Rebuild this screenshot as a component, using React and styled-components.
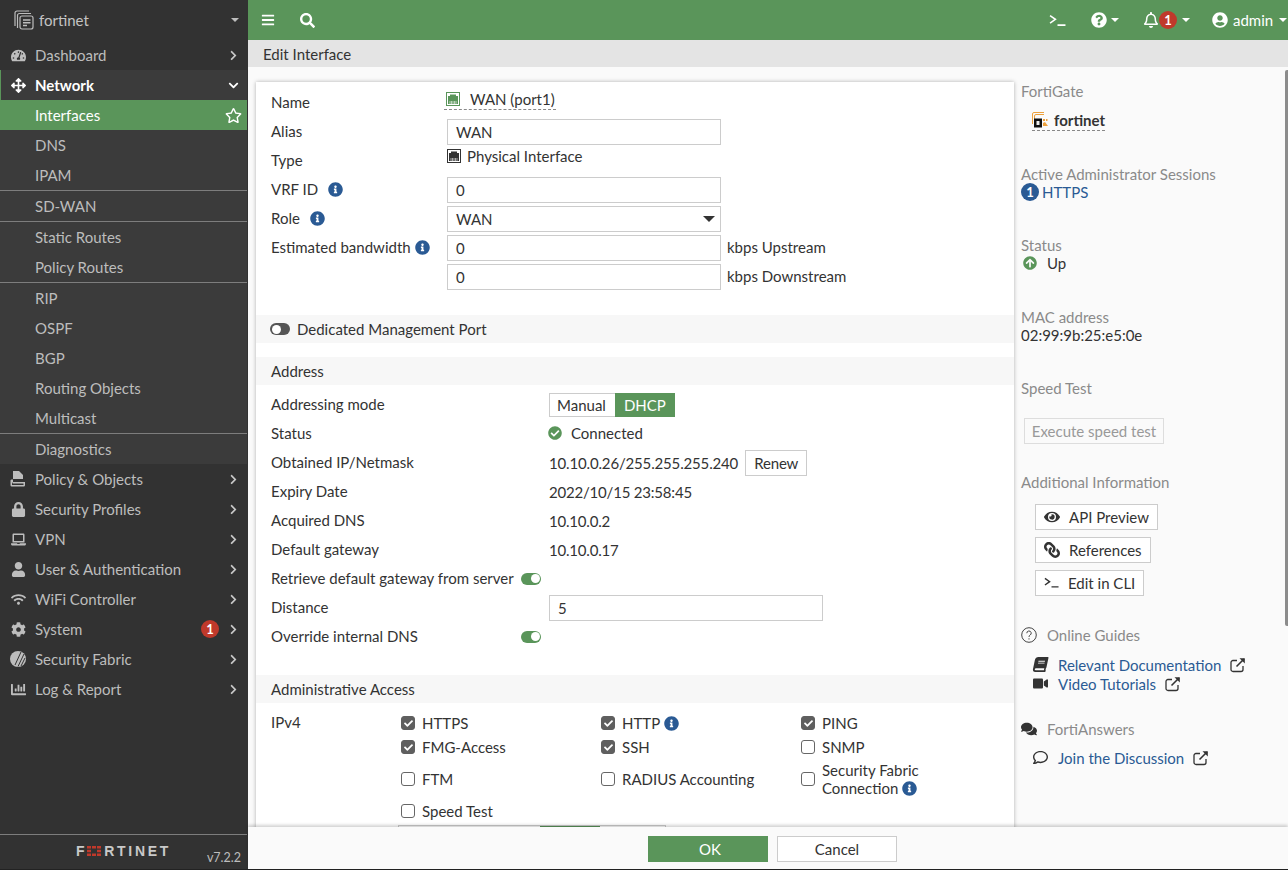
import React from 'react';
import styled, { createGlobalStyle } from 'styled-components';
import {
  FaTachometerAlt, FaArrowsAlt, FaRegStar, FaLock, FaLaptop, FaUser, FaWifi, FaCog, FaChartBar,
  FaBars, FaSearch, FaQuestionCircle, FaRegBell, FaUserCircle, FaInfoCircle, FaCheckCircle,
  FaArrowCircleUp, FaEye, FaLink, FaBook, FaVideo, FaComments, FaRegComment,
  FaChevronRight, FaChevronDown, FaCheck,
} from 'react-icons/fa';

const GREEN = '#5a955a';
const BLUE = '#2a5a94';

const GlobalStyle = createGlobalStyle`
  html, body { margin: 0; padding: 0; height: 100%; overflow: hidden; }
  body { font-family: Lato, "Liberation Sans", sans-serif; font-size: 15px; color: #333; }
  #root { height: 100%; }
  * { box-sizing: border-box; }
`;

const Shell = styled.div`
  display: grid;
  grid-template-columns: 248px 1fr;
  height: 870px;
  position: relative;
  background: #fafafa;
`;

/* ---- left nav ---- */
const Side = styled.nav`
  background: #323232;
  color: #bdbdbd;
  display: flex;
  flex-direction: column;
  height: 870px;
  border-bottom: 1px solid #222;
`;

const SideHead = styled.div`
  height: 40px;
  display: flex;
  align-items: center;
  padding: 0 9px 0 14px;
  color: #c4c4c4;
  gap: 5px;
`;

const Caret = styled.span`
  width: 0;
  height: 0;
  border-left: ${p => p.$size || 4}px solid transparent;
  border-right: ${p => p.$size || 4}px solid transparent;
  border-top: ${p => p.$size || 4}px solid ${p => p.$color || '#fff'};
  margin-left: ${p => p.$left || 0}px;
`;

const NavRow = styled.div`
  height: 30px;
  display: flex;
  align-items: center;
  padding-left: 10px;
  padding-right: 8px;
  margin-right: 1px;
  font-weight: ${p => (p.$open ? 700 : 400)};
  color: ${p => (p.$open ? '#fff' : '#bdbdbd')};
  background: ${p => (p.$open ? '#3b3b3b' : 'transparent')};
  box-shadow: ${p => (p.$open ? `inset 1px 0 0 ${GREEN}` : 'none')};
`;

const NavIcon = styled.span`
  width: 16px;
  height: 16px;
  margin-right: 9px;
  display: flex;
  align-items: center;
  justify-content: center;
  font-size: 15px;
`;

const NavLabel = styled.span`
  flex: 1;
`;

const Chevron = styled.span`
  display: flex;
  font-size: 11px;
  color: ${p => (p.$open ? '#fff' : '#c8c8c8')};
`;

const SubGroup = styled.div`
  background: #3b3b3b;
  margin-right: 1px;
`;

const SubRow = styled.div`
  height: 30px;
  display: flex;
  align-items: center;
  justify-content: space-between;
  padding: 0 5px 0 35px;
  color: ${p => (p.$active ? '#fff' : '#bdbdbd')};
  background: ${p => (p.$active ? GREEN : 'transparent')};
`;

const SubRule = styled.div`
  height: 1px;
  background: #7d7d7d;
`;

const RedBadge = styled.span`
  width: 18px;
  height: 18px;
  border-radius: 50%;
  background: #c0392b;
  color: #fff;
  font-size: 13px;
  font-weight: 700;
  display: flex;
  align-items: center;
  justify-content: center;
  margin-right: ${p => p.$right || 0}px;
`;

const SideFoot = styled.div`
  margin-top: auto;
  height: 35px;
  border-top: 1px solid #7d7d7d;
  display: flex;
  align-items: flex-start;
  justify-content: space-between;
  padding: 9px 6px 0 76px;
  margin-right: 1px;
`;

const Logo = styled.span`
  display: flex;
  align-items: center;
  font-family: "Liberation Sans", sans-serif;
  font-weight: 700;
  font-size: 14px;
  line-height: 14px;
  letter-spacing: 2.7px;
  color: #c9c9c9;
`;

const Version = styled.span`
  font-size: 12.5px;
  margin-top: 6px;
  color: #bdbdbd;
`;

/* ---- right of nav ---- */
const Main = styled.div`
  display: flex;
  flex-direction: column;
  height: 870px;
  min-width: 0;
  border-bottom: 1px solid #222;
`;

const TopBar = styled.header`
  height: 40px;
  flex: none;
  background: ${GREEN};
  color: #fff;
  display: flex;
  align-items: center;
  padding-left: 13px;
`;

const TopIcon = styled.span`
  display: flex;
  font-size: ${p => p.$size || 16}px;
  margin-left: ${p => p.$left || 0}px;
`;

const TopText = styled.span`
  margin-left: 5px;
`;

const TitleBar = styled.div`
  height: 27px;
  flex: none;
  background: #e4e4e4;
  padding-left: 15px;
  line-height: 29px;
  color: #333;
`;

const Body = styled.div`
  flex: 1;
  min-height: 0;
  display: flex;
  overflow: hidden;
  padding: 15px 0 0 8px;
`;

const Panel = styled.section`
  width: 758px;
  flex: none;
  align-self: flex-start;
  background: #fff;
  box-shadow: 0 0 4px rgba(0, 0, 0, 0.3);
  padding-top: 6px;
  padding-bottom: 30px;
`;

const FormRow = styled.div`
  display: grid;
  grid-template-columns: ${p => p.$label}px 1fr;
  align-items: center;
  height: 29px;
  padding-left: 15px;
`;

const Label = styled.div`
  display: flex;
  align-items: center;
  gap: ${p => p.$gap ?? 10}px;
  padding-bottom: 1px;
`;

const InfoIcon = styled(FaInfoCircle)`
  color: ${BLUE};
  font-size: 15px;
  vertical-align: -2px;
`;

const NameValue = styled.span`
  display: inline-flex;
  align-items: center;
  gap: 10px;
  width: 112px;
  margin-left: -3px;
  margin-bottom: 5px;
  padding: 0 0 1px 2px;
  border-bottom: 1px dashed #888;
  height: 20px;
  white-space: nowrap;
`;

const TypeValue = styled.span`
  display: inline-flex;
  align-items: center;
  gap: 6px;
  margin-bottom: 9px;
`;

const Input = styled.div`
  width: 274px;
  height: 26px;
  border: 1px solid #ccc;
  background: #fff;
  display: flex;
  align-items: center;
  justify-content: space-between;
  padding: 0 5px 0 8px;
`;

const InputLine = styled.div`
  display: flex;
  align-items: center;
  gap: 6px;
`;

const Unit = styled.span`
  padding-bottom: 2px;
`;

const SectionBar = styled.div`
  height: 28px;
  background: #f7f7f7;
  display: flex;
  align-items: center;
  gap: 7px;
  padding-left: ${p => p.$left || 15}px;
  margin-top: ${p => p.$top || 0}px;
  margin-bottom: ${p => p.$bottom || 0}px;
`;

const Toggle = styled.span`
  width: 20px;
  height: 12px;
  border-radius: 6px;
  flex: none;
  position: relative;
  display: inline-block;
  background: ${p => (p.$on ? GREEN : '#555')};
  &::after {
    content: '';
    position: absolute;
    top: 1.5px;
    width: 9px;
    height: 9px;
    border-radius: 50%;
    background: #fff;
    ${p => (p.$on ? 'right: 1.5px;' : 'left: 1.5px;')}
  }
`;

const Segments = styled.div`
  display: inline-flex;
  height: 24px;
`;

const Segment = styled.span`
  display: flex;
  align-items: center;
  padding: ${p => (p.$active ? '0 8px' : '0 9px 0 7px')};
  border: 1px solid ${p => (p.$active ? GREEN : '#ccc')};
  background: ${p => (p.$active ? GREEN : '#fff')};
  color: ${p => (p.$active ? '#fff' : '#333')};
  margin-left: ${p => (p.$active ? -1 : 0)}px;
`;

const StatusValue = styled.span`
  display: flex;
  align-items: center;
  gap: 9px;
  color: #333;
  margin-left: -1px;
  padding-bottom: 2px;
`;

const Btn = styled.span`
  display: inline-flex;
  align-items: center;
  justify-content: center;
  height: 26px;
  padding: 0 8px;
  border: 1px solid #ccc;
  background: #fff;
  color: #333;
  gap: 9px;
  white-space: nowrap;
`;

const IpLine = styled.div`
  display: flex;
  align-items: center;
  gap: 7px;
  letter-spacing: -0.16px;
`;

const PlainValue = styled.div`
  letter-spacing: -0.2px;
`;

const AccessGrid = styled.div`
  display: grid;
  grid-template-columns: 130px 200px 200px 1fr;
  grid-template-rows: 24px 24px 40px 24px;
  padding-left: 15px;
  margin-top: 8px;
  align-items: center;
`;

const AccessLabel = styled.div`
  grid-row: 1;
  grid-column: 1;
  margin-top: -2px;
`;

const Check = styled.label`
  display: flex;
  align-items: center;
  gap: 7px;
  grid-column: ${p => p.$col};
  line-height: 18px;
`;

const Box = styled.span`
  width: 14px;
  height: 14px;
  border-radius: 3px;
  flex: none;
  display: flex;
  align-items: center;
  justify-content: center;
  font-size: 9px;
  color: #fff;
  background: ${p => (p.$on ? '#5f5f5f' : '#fff')};
  border: 1px solid ${p => (p.$on ? '#5f5f5f' : '#666')};
`;

const ClippedBar = styled.div`
  display: flex;
  height: 26px;
  margin: 2px 0 0 142px;
  width: 268px;
  border: 1px solid #ccc;
`;

const ClippedPart = styled.span`
  width: ${p => p.$w}px;
  background: ${p => (p.$active ? GREEN : '#fff')};
`;

/* ---- info column ---- */
const Aside = styled.aside`
  flex: 1;
  padding: 0 0 0 7px;
  min-width: 0;
`;

const AsideTitle = styled.div`
  color: #8a8a8a;
  line-height: 18px;
  display: flex;
  align-items: center;
  gap: 10px;
  margin-top: ${p => p.$top || 0}px;
`;

const AsideText = styled.div`
  line-height: 18px;
  display: flex;
  align-items: center;
  color: ${p => p.$color || '#333'};
  gap: ${p => p.$gap ?? 4}px;
  margin-left: ${p => p.$left || 0}px;
`;

const DeviceName = styled.div`
  display: inline-flex;
  align-items: center;
  gap: 5px;
  font-weight: 700;
  height: 22px;
  margin: 9px 0 0 11px;
  border-bottom: 1px dashed #888;
`;

const BlueBadge = styled(RedBadge)`
  background: ${BLUE};
`;

const DisabledBtn = styled(Btn)`
  color: #999;
  border-color: #ddd;
  margin: 21px 0 0 3px;
  width: 140px;
  background: #fafafa;
`;

const ActionList = styled.div`
  display: flex;
  flex-direction: column;
  align-items: flex-start;
  gap: 7px;
  margin: 13px 0 0 14px;
`;

const LinkList = styled.div`
  margin: ${p => p.$top}px 0 0 12px;
`;

const LinkRow = styled.a`
  display: flex;
  align-items: center;
  height: 19px;
  color: ${BLUE};
`;

const LinkIcon = styled.span`
  width: 25px;
  display: flex;
  color: #333;
  font-size: 15px;
`;

const SlantBook = styled(FaBook)`
  transform: skewX(-12deg);
`;

const FlippedLink = styled(FaLink)`
  transform: scaleX(-1);
`;

const ScrollThumb = styled.div`
  position: absolute;
  right: 0;
  top: 70px;
  width: 3px;
  height: 556px;
  background: #8c8c8c;
  border-radius: 2px 0 0 2px;
`;

const Footer = styled.footer`
  height: 42px;
  flex: none;
  background: #fafafa;
  box-shadow: 0 -2px 3px rgba(0, 0, 0, 0.18);
  position: relative;
  display: flex;
  gap: 9px;
  align-items: flex-start;
  padding: 9px 0 0 400px;
`;

const FootBtn = styled.span`
  width: 120px;
  height: 26px;
  display: flex;
  align-items: center;
  justify-content: center;
  padding-left: ${p => (p.$primary ? 4 : 0)}px;
  background: ${p => (p.$primary ? GREEN : '#fff')};
  color: ${p => (p.$primary ? '#fff' : '#333')};
  border: 1px solid ${p => (p.$primary ? GREEN : '#ccc')};
`;

/* ---- drawings ---- */
const Terminal = ({ size = 17 }) => (
  <svg width={size} height={size * 0.75} viewBox="0 0 16 12" fill="none" stroke="currentColor" strokeWidth="1.5">
    <path d="M1 1.5 6 5 1 8.5M8 10.5h7.500" />
  </svg>
);

const PolicyIcon = () => (
  <svg width="16" height="16" viewBox="0 0 16 16" fill="currentColor">
    <path d="M3 0h6l4 4v4H3z" />
    <path d="M1.500 8.500H3v2.500h12v3.200a1.300 1.300 0 0 1-1.300 1.300H1.800A1.300 1.300 0 0 1 .5 14.200V9.500a1 1 0 0 1 1-1zM2 11v3h11.500v-1.500H2.800z" fillRule="evenodd" />
  </svg>
);

const FabricIcon = () => (
  <svg width="16" height="16" viewBox="0 0 16 16">
    <circle cx="8" cy="8" r="8" fill="currentColor" />
    <path d="M5 14 11 1M8 15.500 14 3M11 15l4-8" stroke="#323232" strokeWidth="1" />
  </svg>
);

const HelpOutline = () => (
  <svg width="16" height="16" viewBox="0 0 16 16" fill="none" stroke="#444" strokeWidth="1">
    <circle cx="8" cy="8" r="7.300" />
    <path d="M5.800 6.200a2.200 2.200 0 1 1 3.300 1.900c-.8.500-1.100.9-1.100 1.800" />
    <path d="M8 11.300v1.200" />
  </svg>
);

const DeviceStack = ({ color = '#bdbdbd' }) => (
  <svg width="20" height="20" viewBox="0 0 20 20" fill="none" stroke={color} strokeWidth="1.2">
    <path d="M1 16V3A2 2 0 0 1 3 1h12" />
    <path d="M3.500 18V5.500a2 2 0 0 1 2-2H17" />
    <rect x="6" y="6" width="13" height="13" rx="2" />
    <path d="M9 10h7.500M9 12.800h7.500M9 15.500h4" strokeWidth="1.600" />
  </svg>
);

const FortigateIcon = () => (
  <svg width="17" height="16" viewBox="0 0 17 16" fill="none">
    <path d="M.5 12V2A1.500 1.500 0 0 1 2 .5h10M2.500 12V4A1.500 1.500 0 0 1 4 2.500h8" stroke="#eda13c" />
    <rect x="2" y="6.500" width="8" height="9" fill="#111" />
    <rect x="4.500" y="9" width="3" height="4" fill="#eee" />
    <path d="M11 7h2v2h-2zM14 7h1.500v2H14zM11 11l2-1 3 4h-5z" fill="#eda13c" />
  </svg>
);

const PortIcon = ({ color }) => (
  <svg width="14" height="14" viewBox="0 0 14 14">
    <rect x=".5" y=".5" width="13" height="13" fill="#fff" stroke={color} />
    <path d="M2 4h2V2.500h6V4h2v8H2z" fill={color} />
    <path d="M4 9v3M5.500 9v3M7 9v3M8.500 9v3M10 9v3" stroke="#fff" strokeWidth=".6" />
  </svg>
);

const FortinetMark = () => (
  <svg width="14" height="10" viewBox="0 0 14 10" fill="#c0392b" style={{ margin: '0 3px 0 0' }}>
    <path d="M0 0h4v2.500H0zM5 0h4v2.500H5zM10 0h4v2.500h-4zM0 3.700h4v2.600H0zM10 3.700h4v2.600h-4zM0 7.500h4V10H0zM5 7.500h4V10H5zM10 7.500h4V10h-4z" />
  </svg>
);

const ExternalLink = ({ left = 9 }) => (
  <svg width="16" height="16" viewBox="0 0 16 16" fill="none" stroke="#333" strokeWidth="1.300" style={{ marginLeft: left }}>
    <path d="M13 9v3.500a2 2 0 0 1-2 2H3a2 2 0 0 1-2-2v-7a2 2 0 0 1 2-2h4" />
    <path d="M6.500 9.500 14 2" strokeWidth="1.600" />
    <path d="M9.500 1.200h5.300v5.300z" fill="#333" stroke="none" />
  </svg>
);

/* ---- data ---- */
const topNav = [
  { label: 'Policy & Objects', icon: <PolicyIcon /> },
  { label: 'Security Profiles', icon: <FaLock /> },
  { label: 'VPN', icon: <FaLaptop /> },
  { label: 'User & Authentication', icon: <FaUser /> },
  { label: 'WiFi Controller', icon: <FaWifi /> },
  { label: 'System', icon: <FaCog />, badge: 1 },
  { label: 'Security Fabric', icon: <FabricIcon /> },
  { label: 'Log & Report', icon: <FaChartBar /> },
];

const subNav = [
  ['Interfaces', 'DNS', 'IPAM'],
  ['SD-WAN'],
  ['Static Routes', 'Policy Routes'],
  ['RIP', 'OSPF', 'BGP', 'Routing Objects', 'Multicast'],
  ['Diagnostics'],
];

const plainRows = [
  ['Expiry Date', '2022/10/15 23:58:45'],
  ['Acquired DNS', '10.10.0.2'],
  ['Default gateway', '10.10.0.17'],
];

const NavItem = ({ icon, label, badge }) => (
  <NavRow>
    <NavIcon>{icon}</NavIcon>
    <NavLabel>{label}</NavLabel>
    {badge && <RedBadge $right={9}>{badge}</RedBadge>}
    <Chevron><FaChevronRight /></Chevron>
  </NavRow>
);

const CheckItem = ({ col, on, children }) => (
  <Check $col={col}>
    <Box $on={on}>{on && <FaCheck />}</Box>
    <span>{children}</span>
  </Check>
);

export default function App() {
  return (
    <Shell>
      <GlobalStyle />
      <Side>
        <SideHead>
          <DeviceStack />
          <NavLabel>fortinet</NavLabel>
          <Caret $color="#bdbdbd" />
        </SideHead>
        <NavItem icon={<FaTachometerAlt />} label="Dashboard" />
        <NavRow $open>
          <NavIcon><FaArrowsAlt /></NavIcon>
          <NavLabel>Network</NavLabel>
          <Chevron $open><FaChevronDown /></Chevron>
        </NavRow>
        <SubGroup>
          {subNav.map((group, i) => (
            <React.Fragment key={group[0]}>
              {i > 0 && <SubRule />}
              {group.map(name => (
                <SubRow key={name} $active={name === 'Interfaces'}>
                  {name}
                  {name === 'Interfaces' && <FaRegStar size={17} />}
                </SubRow>
              ))}
            </React.Fragment>
          ))}
        </SubGroup>
        {topNav.map(item => <NavItem key={item.label} {...item} />)}
        <SideFoot>
          <Logo>F<FortinetMark />RTINET</Logo>
          <Version>v7.2.2</Version>
        </SideFoot>
      </Side>

      <Main>
        <TopBar>
          <TopIcon $size={14}><FaBars /></TopIcon>
          <TopIcon $size={15} $left={25}><FaSearch /></TopIcon>
          <TopIcon $left={734}><Terminal /></TopIcon>
          <TopIcon $left={25}><FaQuestionCircle /></TopIcon>
          <Caret $left={4} />
          <TopIcon $left={24}><FaRegBell /></TopIcon>
          <RedBadge>1</RedBadge>
          <Caret $left={5} />
          <TopIcon $left={22}><FaUserCircle /></TopIcon>
          <TopText>admin</TopText>
          <Caret $left={6} />
        </TopBar>
        <TitleBar>Edit Interface</TitleBar>
        <Body>
          <Panel>
            <FormRow $label={176}>
              <Label>Name</Label>
              <div><NameValue><PortIcon color={GREEN} /> WAN (port1)</NameValue></div>
            </FormRow>
            <FormRow $label={176}>
              <Label>Alias</Label>
              <Input>WAN</Input>
            </FormRow>
            <FormRow $label={176}>
              <Label>Type</Label>
              <div><TypeValue><PortIcon color="#333" /> Physical Interface</TypeValue></div>
            </FormRow>
            <FormRow $label={176}>
              <Label>VRF ID <InfoIcon /></Label>
              <Input>0</Input>
            </FormRow>
            <FormRow $label={176}>
              <Label>Role <InfoIcon /></Label>
              <Input>WAN <Caret $color="#333" $size={6} /></Input>
            </FormRow>
            <FormRow $label={176}>
              <Label $gap={4}>Estimated bandwidth <InfoIcon /></Label>
              <InputLine><Input>0</Input> <Unit>kbps Upstream</Unit></InputLine>
            </FormRow>
            <FormRow $label={176}>
              <span />
              <InputLine><Input>0</Input> <Unit>kbps Downstream</Unit></InputLine>
            </FormRow>

            <SectionBar $top={24} $bottom={14} $left={14}>
              <Toggle /> Dedicated Management Port
            </SectionBar>
            <SectionBar $bottom={5}>Address</SectionBar>

            <FormRow $label={278}>
              <Label>Addressing mode</Label>
              <Segments>
                <Segment>Manual</Segment>
                <Segment $active>DHCP</Segment>
              </Segments>
            </FormRow>
            <FormRow $label={278}>
              <Label>Status</Label>
              <StatusValue><FaCheckCircle color={GREEN} size={14} /> Connected</StatusValue>
            </FormRow>
            <FormRow $label={278}>
              <Label>Obtained IP/Netmask</Label>
              <IpLine>10.10.0.26/255.255.255.240 <Btn>Renew</Btn></IpLine>
            </FormRow>
            {plainRows.map(([k, v]) => (
              <FormRow key={k} $label={278}>
                <Label>{k}</Label>
                <PlainValue>{v}</PlainValue>
              </FormRow>
            ))}
            <FormRow $label={250}>
              <Label>Retrieve default gateway from server</Label>
              <Toggle $on />
            </FormRow>
            <FormRow $label={278}>
              <Label>Distance</Label>
              <Input>5</Input>
            </FormRow>
            <FormRow $label={250}>
              <Label>Override internal DNS</Label>
              <Toggle $on />
            </FormRow>

            <SectionBar $top={24}>Administrative Access</SectionBar>
            <AccessGrid>
              <AccessLabel>IPv4</AccessLabel>
              <CheckItem col={2} on>HTTPS</CheckItem>
              <CheckItem col={3} on>HTTP <InfoIcon /></CheckItem>
              <CheckItem col={4} on>PING</CheckItem>
              <CheckItem col={2} on>FMG-Access</CheckItem>
              <CheckItem col={3} on>SSH</CheckItem>
              <CheckItem col={4}>SNMP</CheckItem>
              <CheckItem col={2}>FTM</CheckItem>
              <CheckItem col={3}>RADIUS Accounting</CheckItem>
              <CheckItem col={4}>Security Fabric<br />Connection <InfoIcon /></CheckItem>
              <CheckItem col={2}>Speed Test</CheckItem>
            </AccessGrid>
            <ClippedBar>
              <ClippedPart $w={141} />
              <ClippedPart $w={60} $active />
              <ClippedPart $w={65} />
            </ClippedBar>
          </Panel>

          <Aside>
            <AsideTitle>FortiGate</AsideTitle>
            <DeviceName><FortigateIcon /> fortinet</DeviceName>
            <AsideTitle $top={34}>Active Administrator Sessions</AsideTitle>
            <AsideText $color={BLUE} $gap={3}><BlueBadge>1</BlueBadge> HTTPS</AsideText>
            <AsideTitle $top={35}>Status</AsideTitle>
            <AsideText $gap={10} $left={2}><FaArrowCircleUp color={GREEN} size={14} /> Up</AsideText>
            <AsideTitle $top={36}>MAC address</AsideTitle>
            <AsideText>02:99:9b:25:e5:0e</AsideText>
            <AsideTitle $top={35}>Speed Test</AsideTitle>
            <DisabledBtn>Execute speed test</DisabledBtn>
            <AsideTitle $top={29}>Additional Information</AsideTitle>
            <ActionList>
              <Btn><FaEye size={16} /> API Preview</Btn>
              <Btn><FlippedLink size={16} /> References</Btn>
              <Btn><Terminal size={15} /> Edit in CLI</Btn>
            </ActionList>
            <AsideTitle $top={30}><HelpOutline /> Online Guides</AsideTitle>
            <LinkList $top={11}>
              <LinkRow><LinkIcon><SlantBook /></LinkIcon>Relevant Documentation<ExternalLink /></LinkRow>
              <LinkRow><LinkIcon><FaVideo /></LinkIcon>Video Tutorials<ExternalLink /></LinkRow>
            </LinkList>
            <AsideTitle $top={27}><FaComments size={16} color="#333" /> FortiAnswers</AsideTitle>
            <LinkList $top={10}>
              <LinkRow><LinkIcon><FaRegComment /></LinkIcon>Join the Discussion<ExternalLink /></LinkRow>
            </LinkList>
          </Aside>
        </Body>
        <Footer>
          <FootBtn $primary>OK</FootBtn>
          <FootBtn>Cancel</FootBtn>
        </Footer>
      </Main>
      <ScrollThumb />
    </Shell>
  );
}
